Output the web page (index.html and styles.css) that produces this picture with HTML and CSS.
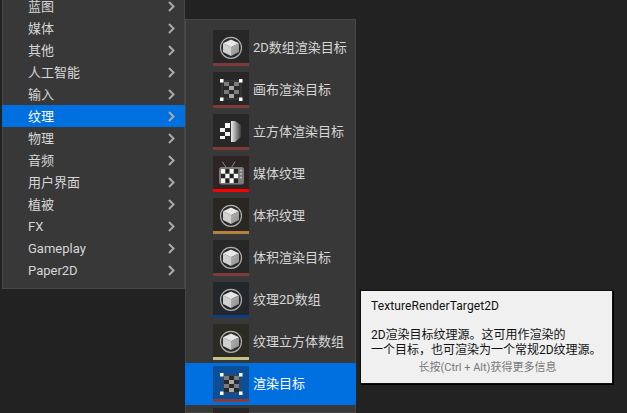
FILE: index.html
```html
<!DOCTYPE html>
<html lang="zh-cn">
	<head>
		<meta charset="utf-8" />
		<title>纹理</title>
		<link rel="stylesheet" href="styles.css">
	</head>

	<body>
		<svg class="defs" width="0" height="0">
			<defs>
				<linearGradient id="halfGrad" x1="0" y1="0" x2="1" y2="0">
					<stop offset="0" stop-color="#eee" />
					<stop offset="1" stop-color="#3c3c3c" />
				</linearGradient>
				<linearGradient id="cubeSide" x1="0" y1="0" x2="1" y2="1">
					<stop offset="0" stop-color="#b4b4b4" />
					<stop offset="1" stop-color="#8c8c8c" />
				</linearGradient>
				<symbol id="arrow" viewBox="0 0 7 11">
					<path d="M1 1l4.500 4.500-4.500 4.500" fill="none" stroke="currentColor" stroke-width="2" />
				</symbol>
				<symbol id="ball" viewBox="0 0 36 36">
					<circle cx="18" cy="17.800" r="10.500" fill="none" stroke="#b0b0b0" stroke-width="1.200" />
					<path d="M18 9.500l8 3.800-8 3.900-8-3.900z" fill="#e6e6e6" />
					<path d="M10 13.300l8 3.900v8.800l-8-4z" fill="#d0d0d0" />
					<path d="M26 13.300l-8 3.900v8.800l8-4z" fill="url(#cubeSide)" />
				</symbol>
				<symbol id="checker" viewBox="0 0 36 36">
					<rect x="9" y="9" width="19" height="18" fill="none" stroke="#444" />
					<path d="M11 10h5v4h-5zM21 10h5v4h-5zM11 18h5v4h-5zM21 18h5v4h-5z" fill="#7c7c7c" />
					<path d="M16 14h5v4h-5zM16 22h5v4h-5z" fill="#a8a8a8" />
					<path d="M16 10h5v4h-5zM11 14h5v4h-5zM21 14h5v4h-5zM16 18h5v4h-5zM11 22h5v4h-5zM21 22h5v4h-5z" fill="#2a2a2a" />
					<path d="M7 7h3.500v3.500h-3.500zM26 7h3.500v3.500h-3.500zM7 25.500h3.500v3.500h-3.500zM26 25.500h3.500v3.500h-3.500z" fill="#fff" />
				</symbol>
				<symbol id="halfcube" viewBox="0 0 36 36">
					<path d="M18 7h4l6 4v12l-6 5h-4z" fill="url(#halfGrad)" />
					<path d="M12 9h5v5h-5zM7 14h5v4h-5zM12 18h5v4h-5zM7 22h5v3h-5z" fill="#f4f4f4" />
				</symbol>
				<symbol id="tv" viewBox="0 0 36 36">
					<path d="M9.300 5.700l4.400 6.600M22 5.700l-4 6.600" stroke="#8a8a8a" stroke-width="1" />
					<rect x="6" y="11" width="25" height="17.500" rx="2.500" fill="#7a7a7a" />
					<rect x="8" y="13" width="17" height="14" fill="#222" />
					<path d="M8 13h4.250v4.670h-4.250zM16.500 13h4.250v4.670h-4.250zM12.250 17.670h4.250v4.660h-4.250zM20.750 17.670h4.250v4.660h-4.250zM8 22.330h4.250v4.670h-4.250zM16.500 22.330h4.250v4.670h-4.250z" fill="#f5f5f5" />
					<circle cx="28" cy="14.500" r="1.100" fill="#bbb" />
					<circle cx="28" cy="18" r="1.100" fill="#bbb" />
					<circle cx="28" cy="21.500" r="1.100" fill="#bbb" />
				</symbol>
			</defs>
		</svg>

		<ul class="menu mainMenu">
			<li class="row">蓝图<svg class="arrow"><use href="#arrow" /></svg></li>
			<li class="row">媒体<svg class="arrow"><use href="#arrow" /></svg></li>
			<li class="row">其他<svg class="arrow"><use href="#arrow" /></svg></li>
			<li class="row">人工智能<svg class="arrow"><use href="#arrow" /></svg></li>
			<li class="row">输入<svg class="arrow"><use href="#arrow" /></svg></li>
			<li class="row active">纹理<svg class="arrow"><use href="#arrow" /></svg></li>
			<li class="row">物理<svg class="arrow"><use href="#arrow" /></svg></li>
			<li class="row">音频<svg class="arrow"><use href="#arrow" /></svg></li>
			<li class="row">用户界面<svg class="arrow"><use href="#arrow" /></svg></li>
			<li class="row">植被<svg class="arrow"><use href="#arrow" /></svg></li>
			<li class="row latin">FX<svg class="arrow"><use href="#arrow" /></svg></li>
			<li class="row latin">Gameplay<svg class="arrow"><use href="#arrow" /></svg></li>
			<li class="row latin">Paper2D<svg class="arrow"><use href="#arrow" /></svg></li>
		</ul>

		<ul class="menu subMenu">
			<li class="asset">
				<div class="thumb target"><svg><use href="#ball" /></svg></div>2D数组渲染目标
			</li>
			<li class="asset">
				<div class="thumb target"><svg><use href="#checker" /></svg></div>画布渲染目标
			</li>
			<li class="asset">
				<div class="thumb target"><svg><use href="#halfcube" /></svg></div>立方体渲染目标
			</li>
			<li class="asset">
				<div class="thumb media"><svg><use href="#tv" /></svg></div>媒体纹理
			</li>
			<li class="asset">
				<div class="thumb volume"><svg><use href="#ball" /></svg></div>体积纹理
			</li>
			<li class="asset">
				<div class="thumb target"><svg><use href="#ball" /></svg></div>体积渲染目标
			</li>
			<li class="asset">
				<div class="thumb array"><svg><use href="#ball" /></svg></div>纹理2D数组
			</li>
			<li class="asset">
				<div class="thumb cubeArray"><svg><use href="#ball" /></svg></div>纹理立方体数组
			</li>
			<li class="asset active">
				<div class="thumb picked"><svg><use href="#checker" /></svg></div>渲染目标
			</li>
			<li class="asset">
				<div class="thumb target"></div>
			</li>
		</ul>

		<div class="tip">
			<p class="tipTitle">TextureRenderTarget2D</p>
			<p class="tipBody">2D渲染目标纹理源。这可用作渲染的<br>一个目标，也可渲染为一个常规2D纹理源。</p>
			<p class="tipHint">长按(Ctrl + Alt)获得更多信息</p>
		</div>
	</body>
</html>
```

FILE: styles.css
```css
*{
	padding:0;
	margin:0;
	list-style: none;
	box-sizing: border-box;
}
html,body {
	height: 100%;
	overflow: hidden;
}
body {
	background-color: #222;
	font-family: Roboto, "Noto Sans CJK SC", sans-serif;
	font-size: 13px;
	color: #d6d6d6;
}
.defs {
	position: absolute;
}
.menu {
	position: absolute;
	background-color: #383838;
	box-shadow: inset 0 0 0 1px #474747;
}
.active {
	background-color: #0070e0;
	color: #fff;
}

/* 左侧菜单 */
.mainMenu {
	left: 2px;
	top: -5px;
	width: 183px;
	padding-bottom: 8px;
}
.row {
	display: flex;
	align-items: center;
	justify-content: space-between;
	height: 22px;
	padding: 0 10px 2px 26px;
}
.latin {
	padding-bottom: 0;
}
.arrow {
	width: 7px;
	height: 11px;
	margin-top: 2px;
	color: #aaa;
}
.latin .arrow {
	margin-top: 0;
}

/* 纹理子菜单 */
.subMenu {
	left: 185px;
	top: 19px;
	width: 171px;
	height: 394px;
	padding-top: 8px;
	overflow: hidden;
}
.asset {
	display: flex;
	align-items: center;
	gap: 4px;
	height: 42px;
	padding: 0 0 4px 28px;
}
.thumb {
	width: 36px;
	height: 36px;
	margin-bottom: -4px;
	border-bottom: 3px solid #7c3a3a;
	background-color: #272727;
	flex-shrink: 0;
	overflow: hidden;
}
.thumb svg {
	display: block;
	width: 36px;
	height: 36px;
}
.media {
	background-color: #2d2525;
	border-bottom-color: #f00;
}
.volume {
	background-color: #2a2622;
	border-bottom-color: #b5813f;
}
.array {
	background-color: #23272b;
	border-bottom-color: #0e3f7a;
}
.cubeArray {
	background-color: #2b2b24;
	border-bottom-color: #c2c283;
}
.picked {
	background-color: #0c4f98;
	border-bottom-color: #8a3a3a;
}

/* 提示框 */
.tip {
	position: absolute;
	left: 361px;
	top: 291px;
	width: 251px;
	height: 92px;
	padding: 8px 8px 0 10px;
	background-color: #f0f0f0;
	color: #111;
	font-size: 12px;
	line-height: 15px;
	box-shadow: 0 0 1px 1px #111, 1px 1px 0 1px #000;
}
.tipTitle {
	letter-spacing: .1px;
	margin-bottom: 14px;
}
.tipHint {
	font-size: 11px;
	color: #777;
	text-align: center;
	margin-top: 2px;
}
```
